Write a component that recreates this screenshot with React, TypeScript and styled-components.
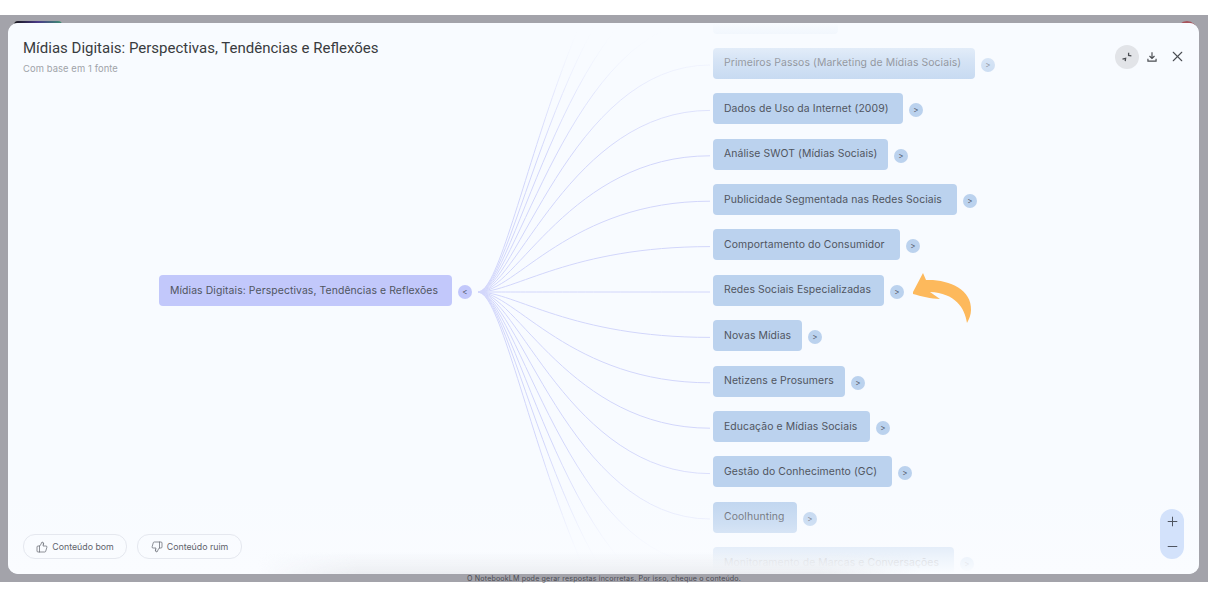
import React from 'react';
import styled, {createGlobalStyle} from 'styled-components';
import {Minus, Plus, ThumbsDown, ThumbsUp, X} from 'lucide-react';

type Branch = {
    label: string,
    width: number,
}

const BRANCHES: Branch[] = [
    {label: "", width: 125},
    {label: "Primeiros Passos (Marketing de Mídias Sociais)", width: 262},
    {label: "Dados de Uso da Internet (2009)", width: 190},
    {label: "Análise SWOT (Mídias Sociais)", width: 175},
    {label: "Publicidade Segmentada nas Redes Sociais", width: 244},
    {label: "Comportamento do Consumidor", width: 187},
    {label: "Redes Sociais Especializadas", width: 171},
    {label: "Novas Mídias", width: 89},
    {label: "Netizens e Prosumers", width: 132},
    {label: "Educação e Mídias Sociais", width: 157},
    {label: "Gestão do Conhecimento (GC)", width: 179},
    {label: "Coolhunting", width: 84},
    {label: "Monitoramento de Marcas e Conversações", width: 241},
]

const ROW_PITCH = 45.4
const ROOT = {x: 478, y: 292}
const LINE_END = 710

// the map keeps going past the panel, so some lines run off the top and bottom
const curveTargets = Array.from({length: 19}, (_, i) => ROOT.y + (i - 9) * ROW_PITCH)

const curvePath = (y: number) => {
    const dx = LINE_END - ROOT.x
    return `M${ROOT.x} ${ROOT.y}C${ROOT.x + dx * 0.16} ${ROOT.y} ${ROOT.x + dx * 0.4} ${y} ${LINE_END} ${y}`
}

const GlobalStyle = createGlobalStyle`
    html, body {
        margin: 0;
        padding: 0;
        background: #ffffff;
    }
    body {
        font-family: "Inter", "Liberation Sans", sans-serif;
    }
`

const Page = styled.div`
    width: 1208px;
    height: 597px;
    padding-top: 15px;
    box-sizing: border-box;
    overflow: hidden;
    background: #ffffff;
`

const Backdrop = styled.div`
    position: relative;
    height: 567px;
    padding: 8px 8px 0 8px;
    box-sizing: border-box;
    display: flex;
    flex-direction: column;
    background: #a3a3aa;
`

const LogoPeek = styled.span`
    position: absolute;
    left: 14px;
    top: 6px;
    width: 48px;
    height: 4px;
    border-radius: 4px 4px 0 0;
    background: linear-gradient(90deg, #17171c 0%, #4a3a88 50%, #3f8f73 100%);
`

const AvatarPeek = styled.span`
    position: absolute;
    left: 1177px;
    top: 6px;
    width: 20px;
    height: 20px;
    border-radius: 50%;
    background: #a8545c;
`

const Panel = styled.div`
    position: relative;
    width: 1191px;
    height: 551px;
    flex: none;
    border-radius: 10px;
    overflow: hidden;
    display: flex;
    flex-direction: column;
    justify-content: space-between;
    background: #f8fbff;
`

const Disclaimer = styled.div`
    height: 8px;
    line-height: 10px;
    font-size: 7.1px;
    letter-spacing: 0.16px;
    text-align: center;
    color: #4a4a52;
    white-space: nowrap;
`

const TopBar = styled.header`
    position: relative;
    display: flex;
    justify-content: space-between;
    padding: 15px 10px 0 15px;
`

const Heading = styled.div`
    display: flex;
    flex-direction: column;
    gap: 5px;
`

const Title = styled.h1`
    margin: 0;
    font-family: "Roboto", "Liberation Sans", sans-serif;
    font-size: 15px;
    line-height: 20px;
    font-weight: 400;
    color: #383b40;
`

const Subtitle = styled.div`
    font-size: 9.4px;
    line-height: 12px;
    letter-spacing: 0.1px;
    color: #a0a3a9;
`

const Tools = styled.div`
    display: flex;
    align-items: center;
    gap: 1px;
`

const ToolButton = styled.span<{$active?: boolean}>`
    width: 24px;
    height: 24px;
    display: flex;
    align-items: center;
    justify-content: center;
    border-radius: 50%;
    color: #4a4d52;
    background: ${props => props.$active ? "#e2e4e8" : "transparent"};
`

const MapCanvas = styled.div`
    position: absolute;
    inset: 0;
    overflow: hidden;
`

const Curves = styled.svg`
    position: absolute;
    inset: 0;
    mask-image: linear-gradient(180deg, transparent 0%, #000 24%, #000 76%, transparent 100%);
`

const RootNode = styled.div`
    position: absolute;
    left: 151px;
    top: 252px;
    display: flex;
    align-items: center;
    gap: 6px;
`

const NodeBox = styled.div<{$root?: boolean, $width: number}>`
    width: ${props => props.$width}px;
    height: 31px;
    box-sizing: border-box;
    flex: none;
    display: flex;
    align-items: center;
    padding: 0 0 1px 11px;
    border-radius: 4px;
    white-space: nowrap;
    font-size: 10.4px;
    letter-spacing: 0.1px;
    color: #50555f;
    background: ${props => props.$root ? "#c2c8fb" : "#bbd2ee"};
`

const Toggle = styled.span<{$root?: boolean}>`
    width: 14px;
    height: 14px;
    margin-top: 3px;
    flex: none;
    display: flex;
    align-items: center;
    justify-content: center;
    border-radius: 50%;
    font-size: 8px;
    line-height: 1;
    color: #4d5462;
    background: ${props => props.$root ? "#c2c8fb" : "#bbd2ee"};
`

const BranchList = styled.div`
    position: absolute;
    left: 705px;
    top: -20.5px;
    display: flex;
    flex-direction: column;
    gap: 14.4px;
`

const BranchRow = styled.div`
    display: flex;
    align-items: center;
    gap: 6px;
`

const Pointer = styled.svg`
    position: absolute;
    left: 889px;
    top: 243px;
`

const TopFade = styled.div`
    position: absolute;
    left: 0;
    right: 0;
    top: 0;
    height: 72px;
    background: linear-gradient(180deg, #f8fbff 0%, rgba(248, 251, 255, 0.9) 14%, rgba(248, 251, 255, 0.45) 50%, rgba(248, 251, 255, 0) 100%);
`

const BottomFade = styled.div`
    position: absolute;
    left: 0;
    right: 0;
    bottom: 0;
    height: 84px;
    background: linear-gradient(180deg, rgba(250, 252, 255, 0) 0%, rgba(250, 252, 255, 0.3) 40%, rgba(250, 252, 255, 0.8) 80%, #fafcff 100%);
`

const BottomShade = styled.div`
    position: absolute;
    left: 250px;
    right: 280px;
    bottom: 0;
    height: 22px;
    background: linear-gradient(180deg, rgba(236, 238, 242, 0) 0%, #eceef2 100%);
    mask-image: linear-gradient(90deg, transparent 0%, #000 15%, #000 85%, transparent 100%);
`

const BottomBar = styled.footer`
    position: relative;
    display: flex;
    justify-content: space-between;
    align-items: flex-end;
    padding: 0 15px 15px 15px;
`

const Feedback = styled.div`
    display: flex;
    gap: 10px;
`

const FeedbackButton = styled.span<{$width: number}>`
    width: ${props => props.$width}px;
    height: 25px;
    box-sizing: border-box;
    display: flex;
    align-items: center;
    justify-content: center;
    gap: 4px;
    border: 1px solid #e5e8ef;
    border-radius: 12px;
    font-size: 8.8px;
    color: #5f636c;
`

const ZoomPill = styled.div`
    width: 24px;
    height: 50px;
    display: flex;
    flex-direction: column;
    align-items: center;
    justify-content: space-around;
    border-radius: 12px;
    color: #4f5560;
    background: #d3e2fb;
`

const CollapseIcon = () => (
    <svg width="12" height="12" viewBox="0 0 12 12" fill="none" stroke="currentColor" strokeWidth="1.3">
        <path d="M1.5 8.2L4.6 7.4L4.2 10.2"/>
        <path d="M7.6 1.8L7.6 4.4L10.4 4.8"/>
    </svg>
)

const DownloadIcon = () => (
    <svg width="14" height="14" viewBox="0 0 24 24" fill="currentColor">
        <path d="M12 16l-5-5 1.4-1.45 2.6 2.6V4h2v8.15l2.6-2.6L17 11l-5 5zM4 20v-5h2v3h12v-3h2v5H4z"/>
    </svg>
)

const App = () => {
    return (
        <Page>
            <GlobalStyle/>
            <Backdrop>
                <LogoPeek/>
                <AvatarPeek/>
                <Panel>
                    <MapCanvas>
                        <Curves width="1191" height="551" viewBox="8 23 1191 551" fill="none">
                            {curveTargets.map(y => (
                                <path key={y} d={curvePath(y)} stroke="#d2d6fb" strokeWidth="1"/>
                            ))}
                        </Curves>
                        <RootNode>
                            <NodeBox $root $width={293}>Mídias Digitais: Perspectivas, Tendências e Reflexões</NodeBox>
                            <Toggle $root>&lt;</Toggle>
                        </RootNode>
                        <BranchList>
                            {BRANCHES.map(branch => (
                                <BranchRow key={branch.label || "hidden"}>
                                    <NodeBox $width={branch.width}>{branch.label}</NodeBox>
                                    {branch.label && <Toggle>&gt;</Toggle>}
                                </BranchRow>
                            ))}
                        </BranchList>
                        <Pointer width="80" height="65" viewBox="897 266 80 65">
                            <path
                                d="M913 292L923 273L926 280C948 279 972 289 971 310C971 315 969 319 967 323C965 308 955 293 930 292L940 299C931 299 921 296 913 294Z"
                                fill="#fdb95c"
                            />
                        </Pointer>
                        <TopFade/>
                        <BottomFade/>
                        <BottomShade/>
                    </MapCanvas>
                    <TopBar>
                        <Heading>
                            <Title>Mídias Digitais: Perspectivas, Tendências e Reflexões</Title>
                            <Subtitle>Com base em 1 fonte</Subtitle>
                        </Heading>
                        <Tools>
                            <ToolButton $active><CollapseIcon/></ToolButton>
                            <ToolButton><DownloadIcon/></ToolButton>
                            <ToolButton><X size={17} strokeWidth={1.5}/></ToolButton>
                        </Tools>
                    </TopBar>
                    <BottomBar>
                        <Feedback>
                            <FeedbackButton $width={104}><ThumbsUp size={12} strokeWidth={1.4}/>Conteúdo bom</FeedbackButton>
                            <FeedbackButton $width={105}><ThumbsDown size={12} strokeWidth={1.4}/>Conteúdo ruim</FeedbackButton>
                        </Feedback>
                        <ZoomPill>
                            <Plus size={15} strokeWidth={1.6}/>
                            <Minus size={15} strokeWidth={1.6}/>
                        </ZoomPill>
                    </BottomBar>
                </Panel>
                <Disclaimer>O NotebookLM pode gerar respostas incorretas. Por isso, cheque o conteúdo.</Disclaimer>
            </Backdrop>
        </Page>
    );
};

export default App;
